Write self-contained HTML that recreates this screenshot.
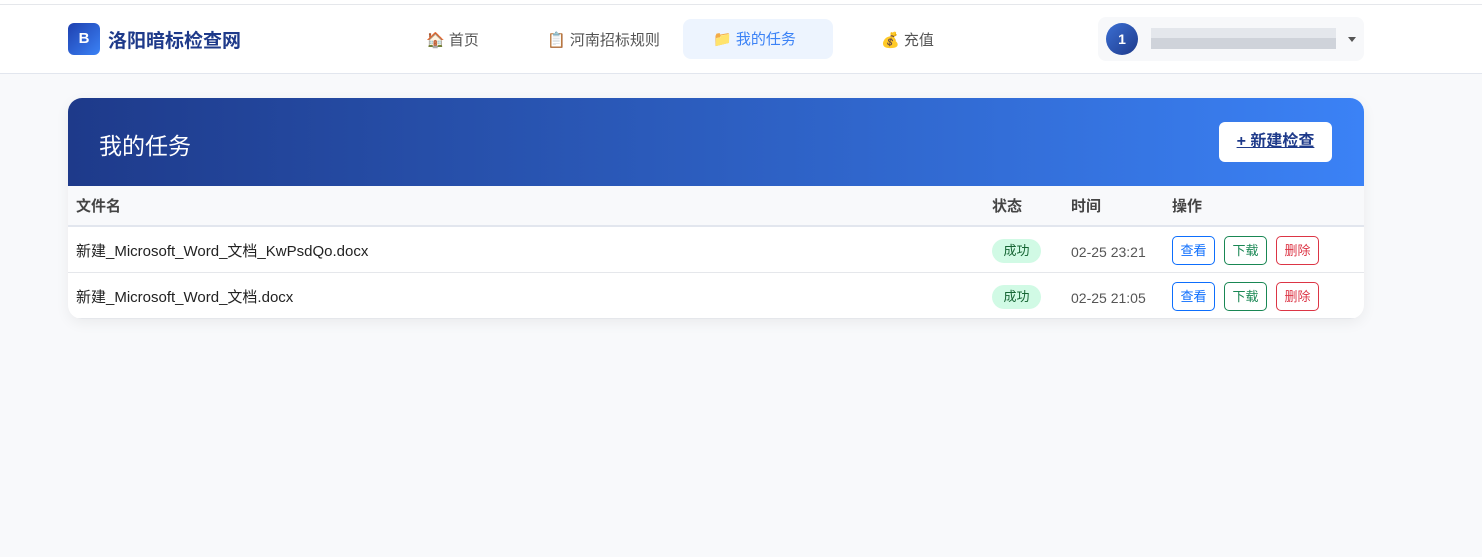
<!DOCTYPE html>
<html><head><meta charset="utf-8"><style>
*{box-sizing:border-box;margin:0;padding:0}
body{width:1482px;height:557px;background:#f8f9fb;font-family:"Liberation Sans","Noto Sans CJK SC",sans-serif;position:relative;overflow:hidden}
.top{position:absolute;top:0;left:0;width:1482px;height:74px;background:#fff;border-bottom:1px solid #e2e6ee}
.top:before{content:"";position:absolute;left:0;top:4px;width:100%;height:1px;background:#e5e7eb}
.logo{position:absolute;left:68px;top:23px;width:32px;height:32px;border-radius:6px;background:linear-gradient(135deg,#1e40af,#3b82f6);color:#fff;font-weight:bold;font-size:15px;text-align:center;line-height:32px}
.brand{position:absolute;left:108px;top:26px;font-size:19px;font-weight:bold;color:#1e3a8a}
.nav{position:absolute;top:21px;height:40px;line-height:40px;font-size:15px;color:#555}
.nav.act{background:#edf4fe;color:#3b82f6;border-radius:8px;width:150px;padding-left:30px;top:19px;line-height:42px}
.user{position:absolute;left:1098px;top:17px;width:266px;height:44px;background:#f7f8fa;border-radius:8px}
.av{position:absolute;left:8px;top:6px;width:32px;height:32px;border-radius:50%;background:linear-gradient(135deg,#3b6fd4,#1e3a8a);color:#fff;font-weight:bold;font-size:14px;text-align:center;line-height:32px}
.card{position:absolute;left:68px;top:98px;width:1296px;height:221px;background:#fff;border-radius:14px;overflow:hidden;box-shadow:0 4px 14px rgba(0,0,0,.06)}
.hd{height:88px;background:linear-gradient(90deg,#1e3a8a,#3b82f6);position:relative}
.hd h1{position:absolute;left:31px;top:29px;font-size:23px;font-weight:normal;color:#fff}
.btn{position:absolute;left:1151px;top:24px;width:113px;height:40px;background:#fff;border-radius:6px;text-align:center;line-height:40px;font-size:16px;font-weight:bold;color:#1e3a8a;text-decoration:underline}
.th{height:41px;background:#f8f9fb;border-bottom:2px solid #e2e6ee;position:relative;font-weight:bold;font-size:15px;color:#444}
.th span,.tr span{position:absolute;top:0;line-height:40px}
.th span{top:1px}
.tr{height:46px;border-bottom:1px solid #e5e7eb;position:relative;font-size:15px;color:#222}
.tr span{line-height:46px;top:2px}
.badge{position:absolute;left:924px;top:12px;width:49px;height:24px;border-radius:12px;background:#d1fae5;color:#166534;font-size:13px;text-align:center;line-height:24px}
.b{position:absolute;top:9px;width:43px;height:29px;border:1px solid;border-radius:5px;font-size:13px;text-align:center;line-height:27px}
</style></head><body>
<div class="top">
<div class="logo">B</div><div class="brand">洛阳暗标检查网</div>
<div class="nav" style="left:426px">🏠 首页</div>
<div class="nav" style="left:547px">📋 河南招标规则</div>
<div class="nav act" style="left:683px">📁 我的任务</div>
<div class="nav" style="left:881px">💰 充值</div>
<div class="user"><div class="av">1</div>
<div style="position:absolute;left:53px;top:11px;width:185px;height:10px;background:#e4e7ec"></div>
<div style="position:absolute;left:53px;top:21px;width:185px;height:11px;background:#cfd3da"></div>
<div style="position:absolute;left:250px;top:20px;border:4px solid transparent;border-top:5px solid #555"></div>
</div></div>
<div class="card">
<div class="hd"><h1>我的任务</h1><div class="btn">+ 新建检查</div></div>
<div class="th"><span style="left:8px">文件名</span><span style="left:924px">状态</span><span style="left:1003px">时间</span><span style="left:1104px">操作</span></div>
<div class="tr"><span style="left:8px">新建_Microsoft_Word_文档_KwPsdQo.docx</span><div class="badge">成功</div><span style="left:1003px;font-size:14px;color:#555">02-25 23:21</span>
<div class="b" style="left:1104px;color:#0d6efd">查看</div><div class="b" style="left:1156px;color:#198754">下载</div><div class="b" style="left:1208px;color:#dc3545">删除</div></div>
<div class="tr"><span style="left:8px">新建_Microsoft_Word_文档.docx</span><div class="badge">成功</div><span style="left:1003px;font-size:14px;color:#555">02-25 21:05</span>
<div class="b" style="left:1104px;color:#0d6efd">查看</div><div class="b" style="left:1156px;color:#198754">下载</div><div class="b" style="left:1208px;color:#dc3545">删除</div></div>
</div>
</body></html>
